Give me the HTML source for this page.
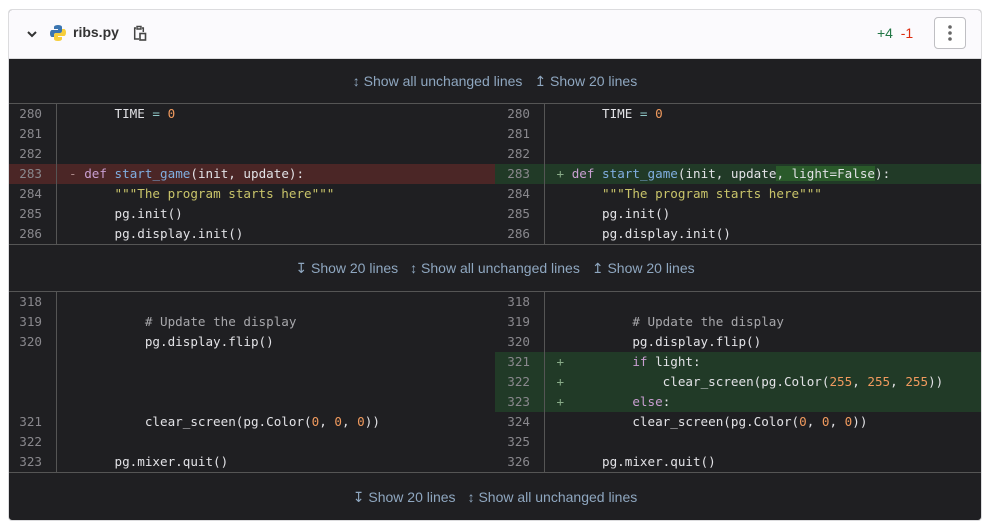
<!DOCTYPE html><html><head><style>
body{margin:0;background:#fff;width:988px;height:527px;overflow:hidden;font-family:"Liberation Sans",sans-serif}
.card{position:absolute;left:8px;top:9px;width:972px;height:510px;border:1px solid #dcdcde;border-radius:4px;overflow:hidden;background:#1f1f22}
.hdr{height:48px;background:#fbfafd;border-bottom:1px solid #dcdcde;position:relative}
.exp{height:44px;border-bottom:1px solid #555;color:#8fa7c0;font-size:14px;text-align:center;line-height:44px;position:relative}
.exp span{margin:0 6px}
.rows{position:relative}
.r{height:20px;display:flex;font:12.6px/20px "DejaVu Sans Mono",monospace;color:#e2e2e6;white-space:pre}
.h{width:486px;display:flex;position:relative}
.h+.h{width:486px}
.n{width:48px;text-align:right;padding-right:14px;box-sizing:border-box;color:#89888d;border-right:1px solid #555;flex:none}
.n2{width:50px}
.c{padding-left:12px}
.h+.h .c{padding-left:11.5px}
.del{background:#4b2626}.add{background:#213a27}
.k{color:#c99fd1}.f{color:#80aee0}.s{color:#c9c46a}.o{color:#f09a5e}.cm{color:#a7a7ab}.eq{color:#8fc8c8}
.hl{background:#2a5a2a}
</style></head><body>
<div class="card">
<div class="hdr">
<svg style="position:absolute;left:17px;top:19px" width="12" height="10" viewBox="0 0 12 10"><path d="M2 3l4 4 4-4" stroke="#333" stroke-width="2" fill="none"/></svg>
<svg style="position:absolute;left:40px;top:14px" width="18" height="18" viewBox="0 0 18 18"><path d="M9 1c-4 0-4 2-4 2v2h4v1H3S1 6 1 9.5 3 13 3 13h2v-2s0-2 2-2h4s2 0 2-2V3s0-2-4-2z" fill="#3b75b0"/><path d="M9 17c4 0 4-2 4-2v-2H9v-1h6s2 0 2-3.5S15 5 15 5h-2v2s0 2-2 2H7S5 9 5 11v4s0 2 4 2z" fill="#f6ce3b"/></svg>
<div style="position:absolute;left:64px;top:14px;font-size:14px;font-weight:bold;color:#333">ribs.py</div>
<svg style="position:absolute;left:124px;top:15px" width="14" height="17" viewBox="0 0 14 17"><path d="M4 1.5h4v2.5H4z" stroke="#444" stroke-width="1.4" fill="none"/><path d="M3 3H1.7v11H6M9 3h1.3v4" stroke="#444" stroke-width="1.5" fill="none"/><rect x="7" y="8.5" width="5.5" height="6.5" stroke="#444" stroke-width="1.6" fill="none"/></svg>
<div style="position:absolute;left:868px;top:15px;font-size:14px"><span style="color:#217645">+4</span>&nbsp; <span style="color:#dd2b0e">-1</span></div>
<div style="position:absolute;left:925px;top:7px;width:30px;height:30px;border:1px solid #bfbfc3;border-radius:4px;background:#fff"><svg width="30" height="30"><circle cx="15" cy="9" r="1.8" fill="#666"/><circle cx="15" cy="15" r="1.8" fill="#666"/><circle cx="15" cy="21" r="1.8" fill="#666"/></svg></div>
</div>
<div class="exp"><span>↕ Show all unchanged lines</span><span>↥ Show 20 lines</span></div>
<div class="rows">
<div class="r"><div class="h"><div class="n">280</div><div class="c">      TIME <span class="eq">=</span> <span class="o">0</span></div></div><div class="h"><div class="n n2">280</div><div class="c">      TIME <span class="eq">=</span> <span class="o">0</span></div></div></div>
<div class="r"><div class="h"><div class="n">281</div></div><div class="h"><div class="n n2">281</div></div></div>
<div class="r"><div class="h"><div class="n">282</div></div><div class="h"><div class="n n2">282</div></div></div>
<div class="r"><div class="h del"><div class="n">283</div><div class="c"><span style="color:#a88">-</span> <span class="k">def</span> <span class="f">start_game</span>(init, update):</div></div><div class="h add"><div class="n n2">283</div><div class="c"><span style="color:#8a8">+</span> <span class="k">def</span> <span class="f">start_game</span>(init, update<span class="hl">, light=False</span>):</div></div></div>
<div class="r"><div class="h"><div class="n">284</div><div class="c">      <span class="s">"""The program starts here"""</span></div></div><div class="h"><div class="n n2">284</div><div class="c">      <span class="s">"""The program starts here"""</span></div></div></div>
<div class="r"><div class="h"><div class="n">285</div><div class="c">      pg.init()</div></div><div class="h"><div class="n n2">285</div><div class="c">      pg.init()</div></div></div>
<div class="r"><div class="h"><div class="n">286</div><div class="c">      pg.display.init()</div></div><div class="h"><div class="n n2">286</div><div class="c">      pg.display.init()</div></div></div>
</div>
<div class="exp" style="border-top:1px solid #555;height:46px;line-height:46px"><span>↧ Show 20 lines</span><span>↕ Show all unchanged lines</span><span>↥ Show 20 lines</span></div>
<div class="rows">
<div class="r"><div class="h"><div class="n">318</div></div><div class="h"><div class="n n2">318</div></div></div>
<div class="r"><div class="h"><div class="n">319</div><div class="c">          <span class="cm"># Update the display</span></div></div><div class="h"><div class="n n2">319</div><div class="c">          <span class="cm"># Update the display</span></div></div></div>
<div class="r"><div class="h"><div class="n">320</div><div class="c">          pg.display.flip()</div></div><div class="h"><div class="n n2">320</div><div class="c">          pg.display.flip()</div></div></div>
<div class="r"><div class="h"><div class="n"></div></div><div class="h add"><div class="n n2">321</div><div class="c"><span style="color:#8a8">+</span>         <span class="k">if</span> light:</div></div></div>
<div class="r"><div class="h"><div class="n"></div></div><div class="h add"><div class="n n2">322</div><div class="c"><span style="color:#8a8">+</span>             clear_screen(pg.Color(<span class="o">255</span>, <span class="o">255</span>, <span class="o">255</span>))</div></div></div>
<div class="r"><div class="h"><div class="n"></div></div><div class="h add"><div class="n n2">323</div><div class="c"><span style="color:#8a8">+</span>         <span class="k">else</span>:</div></div></div>
<div class="r"><div class="h"><div class="n">321</div><div class="c">          clear_screen(pg.Color(<span class="o">0</span>, <span class="o">0</span>, <span class="o">0</span>))</div></div><div class="h"><div class="n n2">324</div><div class="c">          clear_screen(pg.Color(<span class="o">0</span>, <span class="o">0</span>, <span class="o">0</span>))</div></div></div>
<div class="r"><div class="h"><div class="n">322</div></div><div class="h"><div class="n n2">325</div></div></div>
<div class="r"><div class="h"><div class="n">323</div><div class="c">      pg.mixer.quit()</div></div><div class="h"><div class="n n2">326</div><div class="c">      pg.mixer.quit()</div></div></div>
</div>
<div class="exp" style="border-top:1px solid #555;border-bottom:none;height:46px;line-height:48px"><span>↧ Show 20 lines</span><span>↕ Show all unchanged lines</span></div>
</div>
</body></html>
